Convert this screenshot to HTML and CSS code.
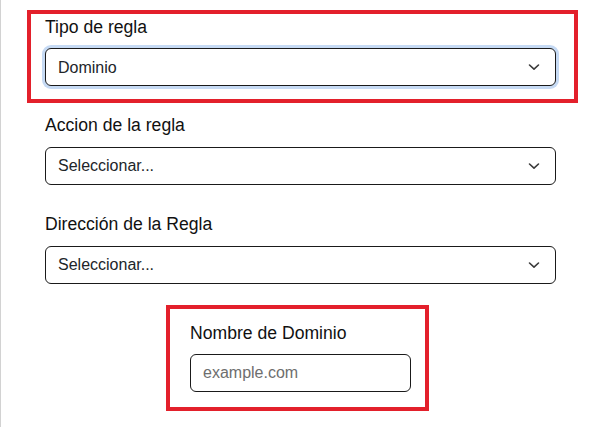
FILE: index.html
```html
<!DOCTYPE html>
<html lang="es">
<head>
<meta charset="utf-8">
<title>Regla</title>
<link rel="stylesheet" href="styles.css">
</head>
<body>
<div class="page">
  <form class="form">
    <div class="field field-hl field-first">
      <label class="label" for="tipo">Tipo de regla</label>
      <div class="select-wrap">
        <select id="tipo" class="control control-focus">
          <option>Dominio</option>
        </select>
        <svg class="chev" width="12" height="8" viewBox="0 0 12 8"><path d="M1.5 2 6 6.2 10.5 2" fill="none" stroke="#3a3a3a" stroke-width="1.6" stroke-linecap="round" stroke-linejoin="round"/></svg>
      </div>
    </div>
    <div class="field">
      <label class="label" for="accion">Accion de la regla</label>
      <div class="select-wrap">
        <select id="accion" class="control">
          <option>Seleccionar...</option>
        </select>
        <svg class="chev" width="12" height="8" viewBox="0 0 12 8"><path d="M1.5 2 6 6.2 10.5 2" fill="none" stroke="#3a3a3a" stroke-width="1.6" stroke-linecap="round" stroke-linejoin="round"/></svg>
      </div>
    </div>
    <div class="field">
      <label class="label" for="dir">Dirección de la Regla</label>
      <div class="select-wrap">
        <select id="dir" class="control">
          <option>Seleccionar...</option>
        </select>
        <svg class="chev" width="12" height="8" viewBox="0 0 12 8"><path d="M1.5 2 6 6.2 10.5 2" fill="none" stroke="#3a3a3a" stroke-width="1.6" stroke-linecap="round" stroke-linejoin="round"/></svg>
      </div>
    </div>
    <div class="field field-hl field-domain">
      <label class="label" for="dom">Nombre de Dominio</label>
      <input id="dom" class="control input-dom" type="text" placeholder="example.com">
    </div>
  </form>
</div>
</body>
</html>
```

FILE: styles.css
```css
* { box-sizing: border-box; }

html, body {
  margin: 0;
  padding: 0;
  background: #fff;
}

.page {
  min-height: 427px;
  border-left: 1px solid #d2d2d2;
  font-family: "Liberation Sans", Arial, sans-serif;
  color: #111;
  overflow: hidden;
}

.form {
  display: flex;
  flex-direction: column;
  width: 511px;
  margin-left: 44px;
}

.field {
  display: flex;
  flex-direction: column;
  margin-bottom: 26.6px;
}

.field-hl {
  border: 4px solid #e3202b;
}

.field-first {
  margin: 10px 0 9px -18px;
  padding: 0 18px 13px 14px;
  width: 551px;
}

.label {
  display: block;
  font-size: 17.6px;
  line-height: 1.5;
  margin-bottom: 8px;
  color: #111;
}

.select-wrap {
  position: relative;
}

.control {
  display: block;
  width: 100%;
  height: 38px;
  margin: 0;
  padding: 0 36px 0 12px;
  font-family: "Liberation Sans", Arial, sans-serif;
  font-size: 16px;
  color: #212529;
  background: #fff;
  border: 1px solid #1a1a1a;
  border-radius: 6px;
  -webkit-appearance: none;
  appearance: none;
  outline: none;
}

.control-focus {
  box-shadow: 0 0 0 3px #c6daf4;
}

.chev {
  position: absolute;
  right: 16px;
  top: 15px;
  pointer-events: none;
}

.field-domain {
  width: 263px;
  margin: -5.6px 0 0 121px;
  padding: 11px 14px 15px 20px;
}

.input-dom {
  padding: 0 12px;
}

.input-dom::placeholder {
  color: #6e6e6e;
  opacity: 1;
}
```
